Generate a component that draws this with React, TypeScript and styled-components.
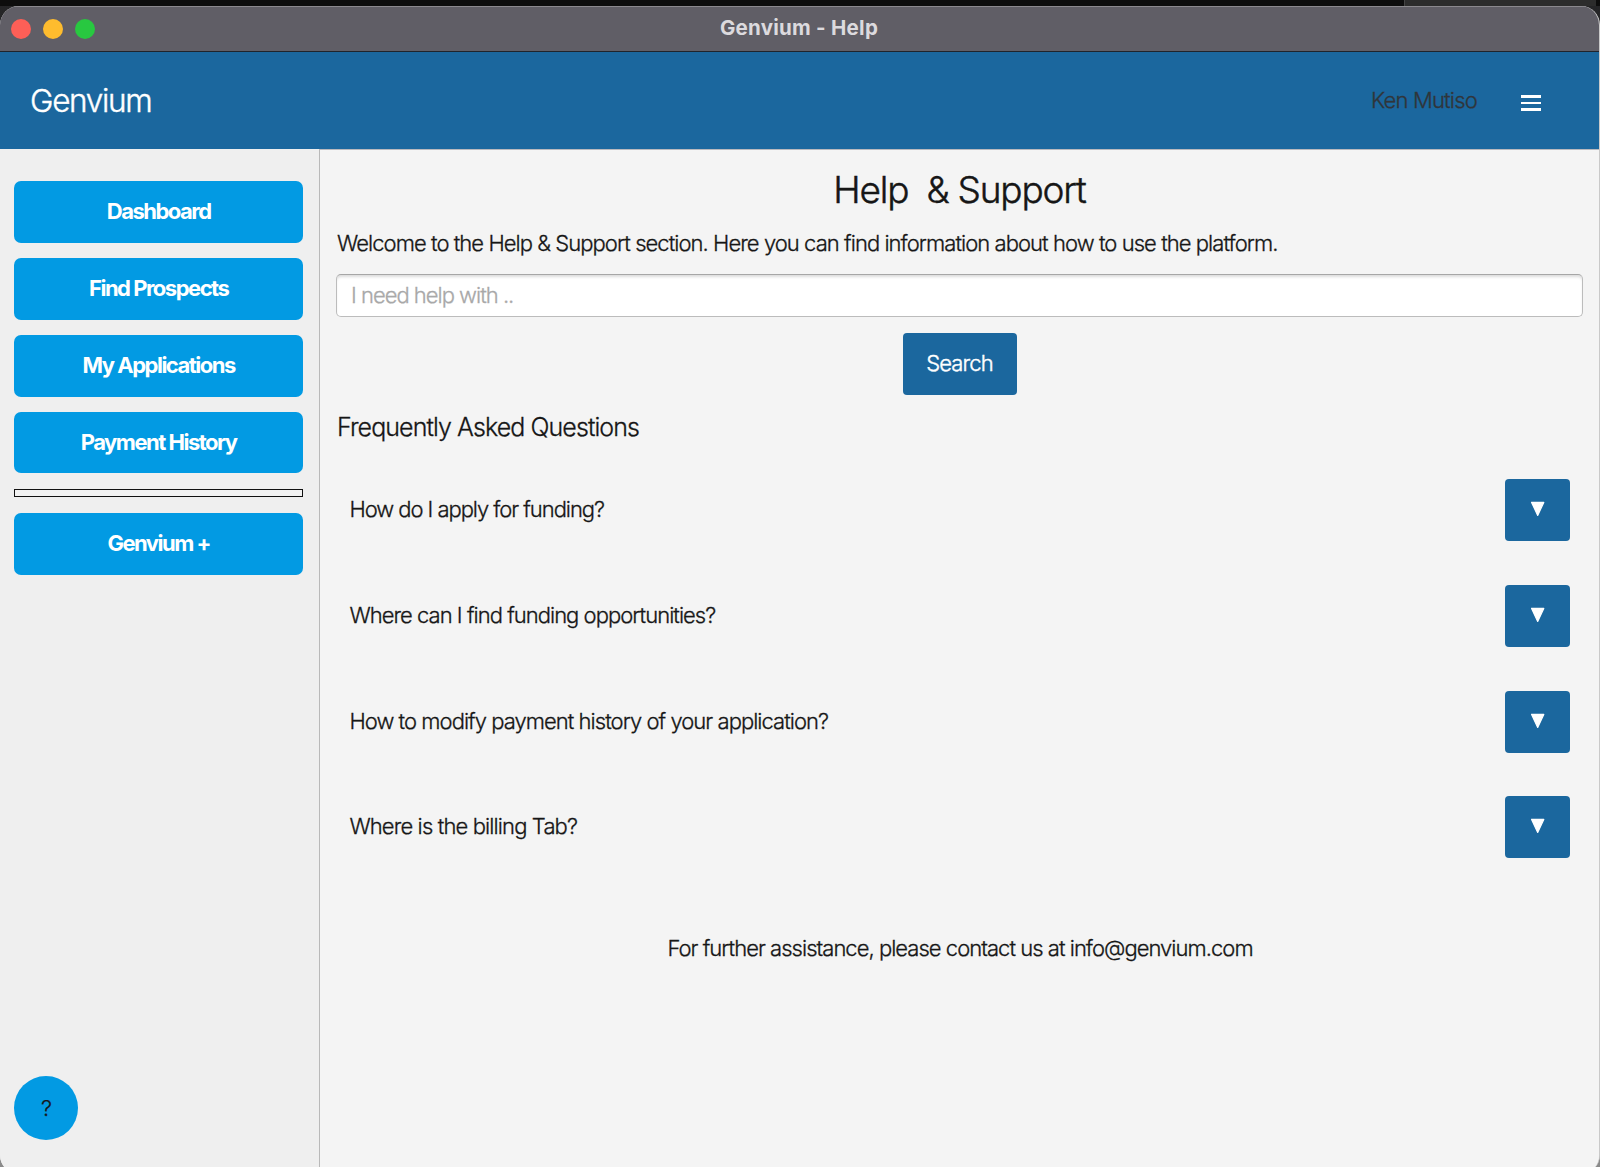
import React, { useState } from "react";
import styled, { createGlobalStyle } from "styled-components";

const GlobalStyle = createGlobalStyle`
  *, *::before, *::after { box-sizing: border-box; }
  html, body { margin: 0; padding: 0; overflow: hidden; }
  body { font-family: Inter, "Liberation Sans", sans-serif; font-size: 22px; color: #161616; }
  button, input { font: inherit; }
`;

const Desktop = styled.div`
  display: flex;
  flex-direction: column;
  width: 1600px;
  height: 1167px;
  overflow: hidden;
  background: linear-gradient(#242426 0, #2b2b2d 60px, #8a8a8a 1100px);
`;

const MenuStrip = styled.div`
  display: flex;
  justify-content: flex-end;
  flex: none;
  height: 6px;
  padding-right: 4px;
  background: #0d0d0d;
`;

const MenuStripTab = styled.div`
  width: 192px;
  background: #2c2c2c;
  border-left: 1px solid #444;
`;

const Window = styled.div`
  display: flex;
  flex-direction: column;
  flex: none;
  height: 1168px;
  border-radius: 19px;
  border-right: 1px solid #c9c9c9;
  overflow: hidden;
  background: #f4f4f4;
`;

const TitleBar = styled.div`
  display: grid;
  grid-template-columns: 1fr auto 1fr;
  align-items: center;
  flex: none;
  height: 46px;
  padding: 0 12px 0 11px;
  background: #605e66;
  border-top: 1px solid #8b898e;
  border-bottom: 1px solid #20242c;
`;

const Lights = styled.div`
  display: flex;
  gap: 12.2px;
`;

const Light = styled.span<{ $color: string }>`
  width: 20px;
  height: 20px;
  border-radius: 50%;
  background: ${(p) => p.$color};
`;

const WindowTitle = styled.div`
  padding-bottom: 2px;
  font-size: 20.5px;
  font-weight: 700;
  line-height: 26px;
  letter-spacing: 0.25px;
  color: #dcdade;
`;

const Header = styled.header`
  display: flex;
  align-items: center;
  flex: none;
  height: 97px;
  padding: 0 58px 0 30px;
  background: #1b679e;
`;

const Brand = styled.div`
  flex: 1;
  padding-top: 1px;
  font-size: 31.5px;
  font-weight: 300;
  line-height: 40px;
  letter-spacing: -1.3px;
  color: #fff;
  -webkit-text-stroke: 0.4px currentColor;
`;

const UserName = styled.div`
  padding-bottom: 1px;
  line-height: 28px;
  font-weight: 300;
  letter-spacing: -0.8px;
  color: #30353a;
  -webkit-text-stroke: 0.3px currentColor;
`;

const MenuButton = styled.button`
  display: flex;
  flex-direction: column;
  gap: 4px;
  width: 20px;
  margin: 5px 0 0 44px;
  padding: 0;
  border: 0;
  background: none;
`;

const MenuBar = styled.span`
  height: 2.7px;
  background: #fff;
`;

const Body = styled.div`
  display: flex;
  flex: 1;
  min-height: 0;
`;

const Sidebar = styled.nav`
  display: flex;
  flex-direction: column;
  flex: none;
  width: 319px;
  padding: 32px 16px 34px 14.4px;
  background: #efefef;
`;

const NavButton = styled.button`
  flex: none;
  height: 61.8px;
  margin-bottom: 15.1px;
  padding: 0 0 2px;
  border: 0;
  border-radius: 7px;
  background: #029ae3;
  color: #fff;
  font-weight: 700;
  letter-spacing: -1.5px;
`;

const NavRule = styled.hr`
  flex: none;
  height: 8px;
  width: 100%;
  margin: 0 0 16.6px;
  border: 1px solid #111;
  background: #f2f2f2;
`;

const HelpBubble = styled.button`
  width: 64px;
  height: 64px;
  margin-top: auto;
  padding: 0;
  border: 0;
  border-radius: 50%;
  background: #029ae3;
  color: #161616;
  font-weight: 300;
  -webkit-text-stroke: 0.25px currentColor;
`;

const Content = styled.main`
  display: flex;
  flex-direction: column;
  flex: 1;
  padding: 18px 16px 0 16px;
  border-top: 1px solid #b9b9be;
  border-left: 1px solid #b9b9b9;
  background: #f4f4f4;
  font-weight: 300;
  -webkit-text-stroke: 0.28px currentColor;
`;

const PageTitle = styled.h1`
  margin: 0;
  text-align: center;
  white-space: pre;
  font-size: 37px;
  font-weight: 300;
  line-height: 44px;
  letter-spacing: -1.22px;
  -webkit-text-stroke: 0.45px currentColor;
`;

const Intro = styled.p`
  margin: 18px 0 0 1px;
  line-height: 26px;
  letter-spacing: -0.945px;
`;

const SearchField = styled.input`
  height: 43px;
  margin: 18px 0 0;
  padding: 0 14px 2px;
  border: 1px solid #bcbcbc;
  border-top-color: #a6a6a6;
  border-radius: 5px;
  background: #fff;
  box-shadow: inset 0 3px 3px -1px #dcdcdc;
  font-weight: 300;
  letter-spacing: -1px;
  outline: none;
  &::placeholder { color: #a8a8a8; opacity: 1; }
`;

const ActionButton = styled.button<{ $width: number }>`
  display: flex;
  align-items: center;
  justify-content: center;
  flex: none;
  width: ${(p) => p.$width}px;
  height: 62px;
  padding: 0 0 2px;
  border: 0;
  border-radius: 4px;
  background: #1b679e;
  color: #fff;
  font-weight: 300;
  letter-spacing: -0.86px;
  -webkit-text-stroke: 0.4px currentColor;
`;

const SearchRow = styled.div`
  display: flex;
  justify-content: center;
  margin-top: 16px;
`;

const SectionTitle = styled.h2`
  margin: 17px 0 0 1px;
  font-size: 25px;
  font-weight: 300;
  line-height: 30px;
  letter-spacing: -0.92px;
`;

const FaqList = styled.div`
  display: flex;
  flex-direction: column;
  gap: 43.8px;
  margin: 37px 13px 0 13.4px;
`;

const FaqRow = styled.div`
  display: flex;
  align-items: center;
  justify-content: space-between;
`;

const Question = styled.span<{ $spacing: number }>`
  padding-bottom: 2px;
  line-height: 28px;
  letter-spacing: ${(p) => p.$spacing}px;
`;

const Contact = styled.p`
  margin: 77px 0 0 1px;
  text-align: center;
  line-height: 26px;
  letter-spacing: -0.97px;
`;

const nav = ["Dashboard", "Find Prospects", "My Applications", "Payment History"];
const faqs = [
  { text: "How do I apply for funding?", spacing: -1.05 },
  { text: "Where can I find funding opportunities?", spacing: -0.97 },
  { text: "How to modify payment history of your application?", spacing: -0.96 },
  { text: "Where is the billing Tab?", spacing: -0.87 },
];

const Caret = () => (
  <svg width="16" height="16" viewBox="0 0 16 16">
    <path d="M1.6 1.4h12.2L7.7 14.4z" fill="#fff" stroke="#fff" strokeWidth="1.2" strokeLinejoin="round" />
  </svg>
);

export default function App() {
  const [query, setQuery] = useState("");
  return (
    <Desktop>
      <GlobalStyle />
      <MenuStrip>
        <MenuStripTab />
      </MenuStrip>
      <Window>
        <TitleBar>
          <Lights>
            <Light $color="#fe5f57" />
            <Light $color="#febc2e" />
            <Light $color="#28c840" />
          </Lights>
          <WindowTitle>Genvium - Help</WindowTitle>
        </TitleBar>
        <Header>
          <Brand>Genvium</Brand>
          <UserName>Ken Mutiso</UserName>
          <MenuButton aria-label="Menu">
            <MenuBar />
            <MenuBar />
            <MenuBar />
          </MenuButton>
        </Header>
        <Body>
          <Sidebar>
            {nav.map((label) => (
              <NavButton key={label}>{label}</NavButton>
            ))}
            <NavRule />
            <NavButton>Genvium +</NavButton>
            <HelpBubble>?</HelpBubble>
          </Sidebar>
          <Content>
            <PageTitle>{"Help  & Support"}</PageTitle>
            <Intro>
              Welcome to the Help &amp; Support section. Here you can find information about how to use the platform.
            </Intro>
            <SearchField
              placeholder="I need help with .."
              value={query}
              onChange={(e) => setQuery(e.target.value)}
            />
            <SearchRow>
              <ActionButton $width={114}>Search</ActionButton>
            </SearchRow>
            <SectionTitle>Frequently Asked Questions</SectionTitle>
            <FaqList>
              {faqs.map((faq) => (
                <FaqRow key={faq.text}>
                  <Question $spacing={faq.spacing}>{faq.text}</Question>
                  <ActionButton $width={65} aria-label="Expand">
                    <Caret />
                  </ActionButton>
                </FaqRow>
              ))}
            </FaqList>
            <Contact>For further assistance, please contact us at info@genvium.com</Contact>
          </Content>
        </Body>
      </Window>
    </Desktop>
  );
}
